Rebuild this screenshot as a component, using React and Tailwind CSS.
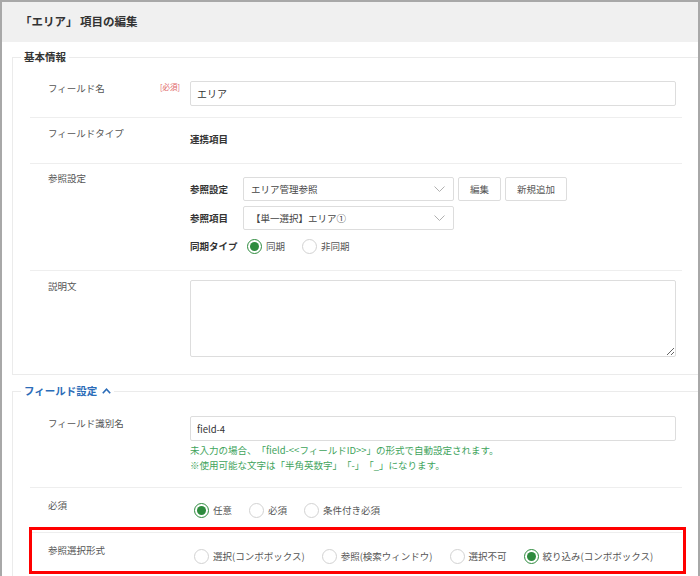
import React from 'react';

const font = { fontFamily: '"Noto Sans CJK JP", "Noto Sans", sans-serif' };

const Chevron = () => (
  <svg width="11" height="6" viewBox="0 0 11 6" fill="none">
    <polyline points="0.5,0.5 5.5,5.5 10.5,0.5" stroke="#b0b0b0" strokeWidth="1" />
  </svg>
);

const Radio = ({ checked, label }) => (
  <label className="flex items-center gap-[4px] h-[16px]">
    <span
      className={`w-[15px] h-[15px] rounded-full border flex items-center justify-center bg-white ${
        checked ? 'border-[1.5px] border-[#2e8b3e]' : 'border-[#d2d2d2]'
      }`}
    >
      {checked && <span className="w-[9px] h-[9px] rounded-full bg-[#2e8b3e]" />}
    </span>
    <span className="text-[9.5px] leading-[16px] text-[#555]">{label}</span>
  </label>
);

const Row = ({ label, badge, last, className, contentClass, children }) => (
  <div className={`flex pl-[18px] pr-[6px] ${last ? '' : 'border-b border-[#eeeeee]'} ${className}`}>
    <div className="w-[142px] shrink-0 flex justify-between pr-[10px]">
      <span className="text-[9.5px] leading-[16px] text-[#555]">{label}</span>
      {badge && <span className="text-[7.5px] leading-[14px] text-[#e06666]">{badge}</span>}
    </div>
    <div className={`flex-1 ${contentClass || ''}`}>{children}</div>
  </div>
);

const Select = ({ value }) => (
  <div className="w-[211px] h-[24px] border border-[#dddddd] rounded-[2px] flex items-center justify-between pl-[7px] pr-[8px] text-[9.5px] text-[#444]">
    <span>{value}</span>
    <Chevron />
  </div>
);

const Button = ({ children, w }) => (
  <button className={`${w} h-[24px] ml-[4px] border border-[#dddddd] rounded-[2px] bg-white text-[9.5px] text-[#555]`}>
    {children}
  </button>
);

export default function App() {
  return (
    <div
      className="w-[700px] h-[576px] overflow-hidden bg-white border-2 border-b-0 border-[#a8a8a8] relative [text-spacing-trim:space-all]"
      style={font}
    >
      <div className="h-[40px] bg-[#f0f0f0] pl-[18px] pt-[11px]">
        <h1 className="text-[11.5px] leading-[16px] font-bold text-[#333]">「エリア」 項目の編集</h1>
      </div>

      <fieldset className="mt-[7px] ml-[10px] border border-r-0 border-[#ebebeb]">
        <legend className="ml-[8px] px-[3px] text-[10.5px] leading-[16px] font-bold text-[#333]">基本情報</legend>
        <div className="ml-[17px] mr-[16px]">
          <Row label="フィールド名" badge="[必須]" className="pt-[15px] pb-[11px]" contentClass="mt-[1px]">
            <input
              readOnly
              value="エリア"
              className="block w-full h-[25px] border border-[#dddddd] rounded-[2px] px-[6px] text-[10px] text-[#333] outline-none"
            />
          </Row>

          <Row label="フィールドタイプ" className="pt-[7px] pb-[16px]" contentClass="mt-[6px]">
            <span className="block text-[9.5px] leading-[16px] font-bold text-[#333]">連携項目</span>
          </Row>

          <Row label="参照設定" className="pt-[6px] pb-[16px]" contentClass="mt-[7px]">
            <div className="flex items-center">
              <span className="w-[53px] text-[9.5px] font-bold text-[#333]">参照設定</span>
              <Select value="エリア管理参照" />
              <Button w="w-[43px]">編集</Button>
              <Button w="w-[62px]">新規追加</Button>
            </div>
            <div className="flex items-center mt-[5px]">
              <span className="w-[53px] text-[9.5px] font-bold text-[#333]">参照項目</span>
              <Select value="【単一選択】エリア①" />
            </div>
            <div className="flex items-center mt-[8px]">
              <span className="w-[53px] text-[9.5px] leading-[16px] font-bold text-[#333]">同期タイプ</span>
              <div className="flex items-center gap-[17px] pl-[4px]">
                <Radio checked label="同期" />
                <Radio label="非同期" />
              </div>
            </div>
          </Row>

          <Row label="説明文" last className="pt-[7px] pb-[17px]" contentClass="mt-[2px]">
            <textarea className="block w-full h-[77px] border border-[#dddddd] rounded-[2px] resize-y outline-none" />
          </Row>
        </div>
      </fieldset>

      <fieldset className="mt-[8px] ml-[10px] border border-r-0 border-[#ebebeb]">
        <legend className="ml-[8px] px-[3px] text-[10.5px] leading-[16px] font-bold text-[#2b6cb8]">
          <span className="flex items-center gap-[5px]">
            フィールド設定
            <svg width="9" height="6" viewBox="0 0 9 6" fill="none">
              <polyline points="0.8,5.2 4.5,1.2 8.2,5.2" stroke="#2b6cb8" strokeWidth="1.6" />
            </svg>
          </span>
        </legend>
        <div className="ml-[17px] mr-[16px]">
          <Row label="フィールド識別名" className="pt-[16px] pb-[14px]" contentClass="mt-[1px]">
            <input
              readOnly
              value="field-4"
              className="block w-full h-[25px] border border-[#dddddd] rounded-[2px] px-[6px] text-[9.5px] text-[#333] outline-none"
            />
            <p className="mt-[2px] text-[9.5px] leading-[15px] text-[#3ea35b]">
              未入力の場合、「field-&lt;&lt;フィールドID&gt;&gt;」の形式で自動設定されます。
              <br />
              ※使用可能な文字は「半角英数字」「-」「_」になります。
            </p>
          </Row>

          <Row label="必須" className="pt-[9px] pb-[14px]" contentClass="mt-[5px]">
            <div className="flex items-center gap-[17px] pl-[4px]">
              <Radio checked label="任意" />
              <Radio label="必須" />
              <Radio label="条件付き必須" />
            </div>
          </Row>

          <Row label="参照選択形式" last className="pt-[9px] pb-[14px]" contentClass="mt-[6px]">
            <div className="flex items-center gap-[17px] pl-[4px]">
              <Radio label="選択(コンボボックス)" />
              <Radio label="参照(検索ウィンドウ)" />
              <Radio label="選択不可" />
              <Radio checked label="絞り込み(コンボボックス)" />
            </div>
          </Row>
        </div>
      </fieldset>

      <div className="absolute left-[27px] top-[525px] w-[657px] h-[47px] border-[3px] border-[#ff0000] pointer-events-none" />
    </div>
  );
}
